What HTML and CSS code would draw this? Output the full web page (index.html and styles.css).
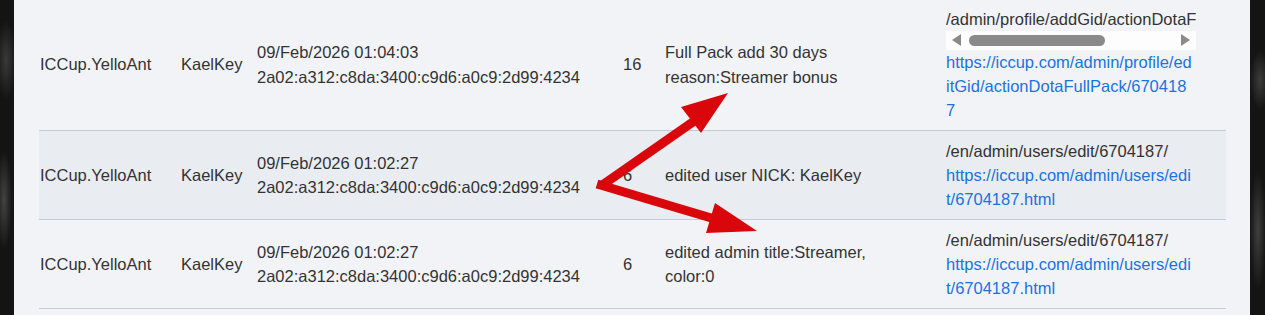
FILE: index.html
```html
<!DOCTYPE html>
<html lang="en">
<head>
<meta charset="utf-8">
<title>Admin log</title>
<link rel="stylesheet" href="styles.css">
</head>
<body>
<div class="page">
  <div class="panel">
    <table class="log">
      <colgroup>
        <col class="c-admin"><col class="c-user"><col class="c-date"><col class="c-num"><col class="c-desc"><col class="c-url">
      </colgroup>
      <tbody>
        <tr>
          <td>ICCup.YelloAnt</td>
          <td>KaelKey</td>
          <td>09/Feb/2026 01:04:03<br>2a02:a312:c8da:3400:c9d6:a0c9:2d99:4234</td>
          <td>16</td>
          <td>Full Pack add 30 days<br>reason:Streamer bonus</td>
          <td>
            <div class="path clip">/admin/profile/addGid/actionDotaFullPack/6704187/</div>
            <div class="hscroll"><span class="arr-l"></span><span class="thumb"></span><span class="spacer"></span><span class="arr-r"></span></div>
            <a class="link" href="#">https://iccup.com/admin/profile/editGid/actionDotaFullPack/6704187</a>
          </td>
        </tr>
        <tr class="alt">
          <td>ICCup.YelloAnt</td>
          <td>KaelKey</td>
          <td>09/Feb/2026 01:02:27<br>2a02:a312:c8da:3400:c9d6:a0c9:2d99:4234</td>
          <td>6</td>
          <td>edited user NICK: KaelKey</td>
          <td>
            <div class="path">/en/admin/users/edit/6704187/</div>
            <a class="link" href="#">https://iccup.com/admin/users/edit/6704187.html</a>
          </td>
        </tr>
        <tr>
          <td>ICCup.YelloAnt</td>
          <td>KaelKey</td>
          <td>09/Feb/2026 01:02:27<br>2a02:a312:c8da:3400:c9d6:a0c9:2d99:4234</td>
          <td>6</td>
          <td>edited admin title:Streamer, color:0</td>
          <td>
            <div class="path">/en/admin/users/edit/6704187/</div>
            <a class="link" href="#">https://iccup.com/admin/users/edit/6704187.html</a>
          </td>
        </tr>
        <tr>
          <td>&nbsp;</td><td></td><td></td><td></td><td></td><td></td>
        </tr>
      </tbody>
    </table>
  </div>
</div>
<svg class="arrows" width="1265" height="315" viewBox="0 0 1265 315" aria-hidden="true">
  <line x1="601" y1="186" x2="700" y2="117" stroke="#d9070b" stroke-width="9"/>
  <polygon points="728,93 681,107 701,133" fill="#d9070b"/>
  <line x1="597" y1="184" x2="718" y2="220" stroke="#d9070b" stroke-width="9"/>
  <polygon points="757,231 715,203 706,233" fill="#d9070b"/>
</svg>
</body>
</html>
```

FILE: styles.css
```css
html, body {
  margin: 0;
  padding: 0;
}
body {
  position: relative;
  width: 1265px;
  height: 315px;
  overflow: hidden;
  background-color: #141414;
  background-image:
    radial-gradient(ellipse 10px 40px at 6px 60px, #3a3a3a, transparent),
    radial-gradient(ellipse 8px 50px at 4px 200px, #444, transparent),
    radial-gradient(ellipse 10px 30px at 1260px 80px, #3c3c3c, transparent),
    radial-gradient(ellipse 8px 60px at 1258px 230px, #404040, transparent);
  font-family: "Liberation Sans", Arial, sans-serif;
  font-size: 16.5px;
  color: #333;
}
.page {
  display: flex;
  height: 315px;
  padding: 0 15px 0 14px;
}
.panel {
  flex: 1;
  background: #f2f3f7;
  padding: 0 24px 0 25px;
  overflow: hidden;
}
.log {
  width: 100%;
  table-layout: fixed;
  border-collapse: collapse;
  margin-top: -1px;
  line-height: 24.2px;
}
.c-admin { width: 141px; }
.c-user { width: 76px; }
.c-date { width: 366px; }
.c-num { width: 42px; }
.c-desc { width: 281px; }
.c-url { width: 281px; }
.log td {
  padding: 7.7px 30px 7.7px 1px;
  vertical-align: middle;
  border-bottom: 1px solid #c3cad8;
  white-space: normal;
}
.log tr.alt td {
  background: #e9ecf1;
}
.path {
  width: 250px;
}
.clip {
  white-space: nowrap;
  overflow: hidden;
}
.hscroll {
  width: 250px;
  height: 19px;
  box-sizing: border-box;
  background: #fdfdfd;
  display: flex;
  align-items: center;
  padding: 0 6px;
}
.arr-l {
  width: 0;
  height: 0;
  border-top: 6px solid transparent;
  border-bottom: 6px solid transparent;
  border-right: 9px solid #8a8a8a;
}
.arr-r {
  width: 0;
  height: 0;
  border-top: 6px solid transparent;
  border-bottom: 6px solid transparent;
  border-left: 9px solid #8a8a8a;
}
.thumb {
  margin-left: 8px;
  width: 136px;
  height: 11px;
  border-radius: 6px;
  background: #8a8a8a;
}
.spacer {
  flex: 1;
}
.link {
  display: block;
  width: 247px;
  color: #1a73e0;
  text-decoration: none;
  word-break: break-all;
}
.arrows {
  position: absolute;
  left: 0;
  top: 0;
  pointer-events: none;
}
```
